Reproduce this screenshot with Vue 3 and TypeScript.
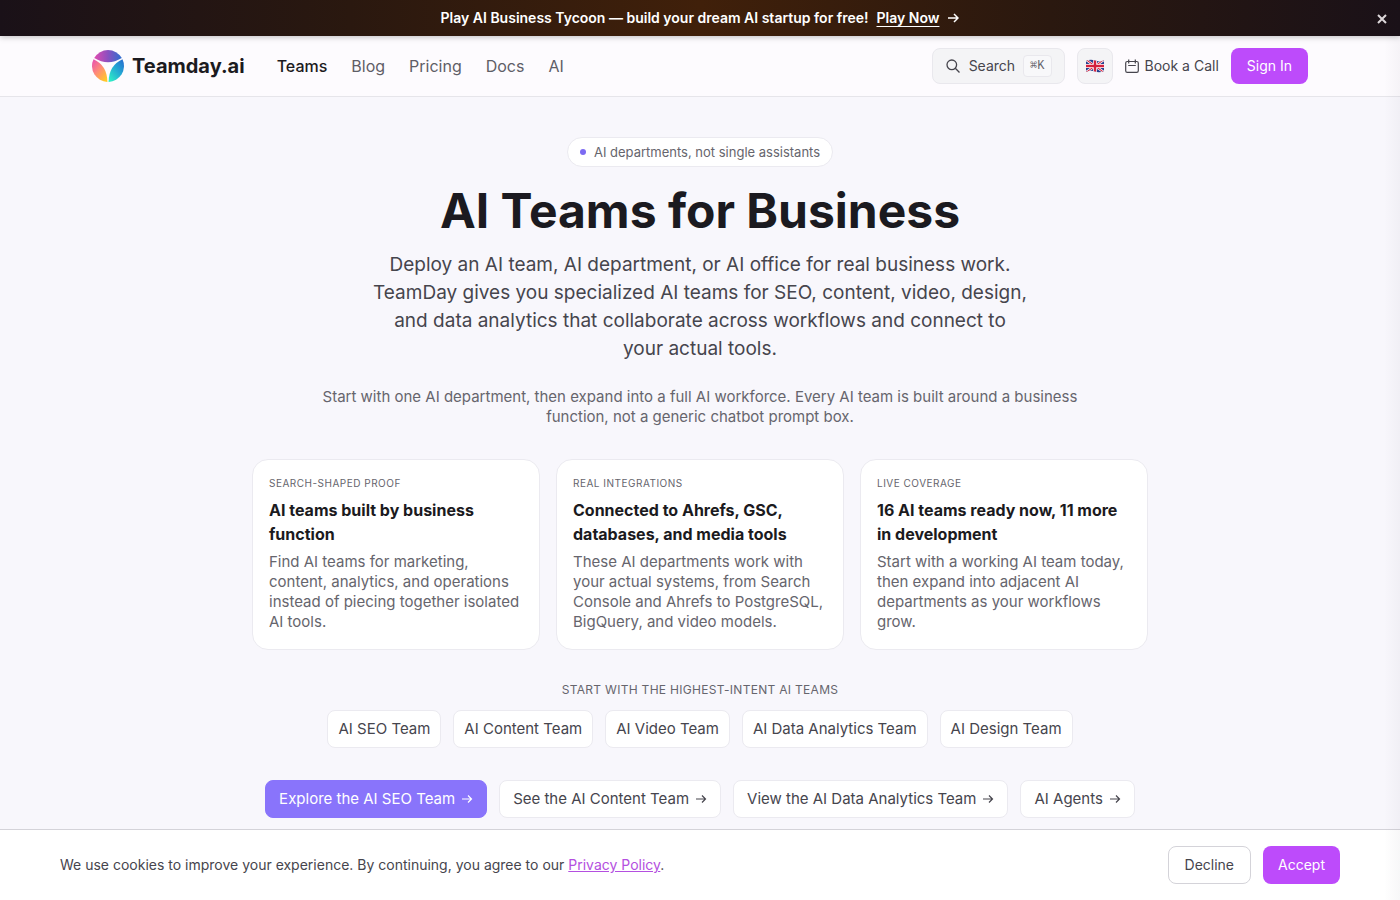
<script setup lang="ts">
interface Card {
  label: string
  title: string
  text: string
}

const navItems: string[] = ['Teams', 'Blog', 'Pricing', 'Docs', 'AI']

const cards: Card[] = [
  {
    label: 'Search-shaped proof',
    title: 'AI teams built by business function',
    text: 'Find AI teams for marketing, content, analytics, and operations instead of piecing together isolated AI tools.',
  },
  {
    label: 'Real integrations',
    title: 'Connected to Ahrefs, GSC, databases, and media tools',
    text: 'These AI departments work with your actual systems, from Search Console and Ahrefs to PostgreSQL, BigQuery, and video models.',
  },
  {
    label: 'Live coverage',
    title: '16 AI teams ready now, 11 more in development',
    text: 'Start with a working AI team today, then expand into adjacent AI departments as your workflows grow.',
  },
]

const teams: string[] = [
  'AI SEO Team',
  'AI Content Team',
  'AI Video Team',
  'AI Data Analytics Team',
  'AI Design Team',
]

const actions: string[] = [
  'Explore the AI SEO Team',
  'See the AI Content Team',
  'View the AI Data Analytics Team',
  'AI Agents',
]
</script>

<template>
  <div class="page">
    <div class="promo">
      <p class="promo-text">
        <span>Play AI Business Tycoon — build your dream AI startup for free!</span>
        <a href="#" class="promo-link">Play Now</a>
        <svg class="promo-arrow" viewBox="0 0 12 12" aria-hidden="true">
          <path d="M1 6h10M7 2l4 4-4 4" />
        </svg>
      </p>
      <button type="button" class="promo-close" aria-label="Close">
        <svg viewBox="0 0 10 10" aria-hidden="true"><path d="M1 1l8 8M9 1L1 9" /></svg>
      </button>
    </div>

    <header class="header">
      <div class="header-inner">
        <a href="#" class="brand">
          <svg class="logo" viewBox="0 0 32 32" aria-hidden="true">
            <defs>
              <linearGradient id="logo-top" x1="0" y1="0" x2="1" y2="0">
                <stop offset="0" stop-color="#e14bb0" />
                <stop offset="0.5" stop-color="#8a50c0" />
                <stop offset="1" stop-color="#2b6fd0" />
              </linearGradient>
              <linearGradient id="logo-left" x1="0" y1="0" x2="0.8" y2="1">
                <stop offset="0" stop-color="#e64cb4" />
                <stop offset="0.5" stop-color="#ff8b78" />
                <stop offset="1" stop-color="#ffc928" />
              </linearGradient>
              <linearGradient id="logo-right" x1="1" y1="0" x2="0.2" y2="1">
                <stop offset="0" stop-color="#2869cf" />
                <stop offset="0.5" stop-color="#23a9d3" />
                <stop offset="1" stop-color="#2eebc6" />
              </linearGradient>
            </defs>
            <path fill="url(#logo-top)" d="M2.2 8A16 16 0 0 1 29.8 8Q16 16.4 2.2 8Z" />
            <path fill="url(#logo-left)" d="M1.5 9.3Q15.2 15.4 15.4 32A16 16 0 0 1 1.5 9.3Z" />
            <path fill="url(#logo-right)" d="M30.5 9.3Q16.8 15.4 16.6 32A16 16 0 0 0 30.5 9.3Z" />
          </svg>
          <span>Teamday.ai</span>
        </a>
        <nav class="nav" aria-label="Main">
          <a
            v-for="(item, i) in navItems"
            :key="item"
            href="#"
            class="nav-link"
            :class="{ active: i === 0 }"
          >{{ item }}</a>
        </nav>
        <div class="tools">
          <button type="button" class="search">
            <svg class="search-icon" viewBox="0 0 16 16" aria-hidden="true">
              <circle cx="6.8" cy="6.8" r="4.8" />
              <path d="M10.300 10.300L14.500 14.500" />
            </svg>
            <span>Search</span>
            <kbd class="kbd">⌘K</kbd>
          </button>
          <button type="button" class="language" aria-label="Language: English">
            <svg class="flag" viewBox="0 0 20 14" aria-hidden="true">
              <defs>
                <clipPath id="flag-wave">
                  <path d="M1 2Q5.500 -0.200 10 1.600T19 1.200V12Q14.500 14.200 10 12.500T1 13Z" />
                </clipPath>
              </defs>
              <g clip-path="url(#flag-wave)">
                <rect width="20" height="14" fill="#27408f" />
                <path d="M0 0L20 14M20 0L0 14" stroke="#fff" stroke-width="2.400" />
                <path d="M0 0L20 14M20 0L0 14" stroke="#d4213d" stroke-width="1.100" />
                <path d="M10 0V14M0 7H20" stroke="#fff" stroke-width="3.800" />
                <path d="M10 0V14M0 7H20" stroke="#d4213d" stroke-width="2.400" />
              </g>
            </svg>
          </button>
          <a href="#" class="book">
            <svg class="calendar" viewBox="0 0 14 14" aria-hidden="true">
              <rect x="0.700" y="2.500" width="12.600" height="10.800" rx="1.600" />
              <path d="M3.700 0.500v4M10.300 0.500v4M3.200 6.500h7.600" />
            </svg>
            <span>Book a Call</span>
          </a>
          <button type="button" class="sign-in">Sign In</button>
        </div>
      </div>
    </header>

    <main class="hero">
      <p class="pill"><span class="dot"></span>AI departments, not single assistants</p>
      <h1 class="title">AI Teams for Business</h1>
      <p class="lead">
        Deploy an AI team, AI department, or AI office for real business work. TeamDay gives you
        specialized AI teams for SEO, content, video, design, and data analytics that collaborate
        across workflows and connect to your actual tools.
      </p>
      <p class="sublead">
        Start with one AI department, then expand into a full AI workforce. Every AI team is built
        around a business function, not a generic chatbot prompt box.
      </p>

      <section class="cards">
        <article v-for="card in cards" :key="card.label" class="card">
          <p class="card-label">{{ card.label }}</p>
          <h2 class="card-title">{{ card.title }}</h2>
          <p class="card-text">{{ card.text }}</p>
        </article>
      </section>

      <p class="teams-label">Start with the highest-intent AI teams</p>
      <div class="teams">
        <a v-for="team in teams" :key="team" href="#" class="chip">{{ team }}</a>
      </div>

      <div class="actions">
        <a
          v-for="(action, i) in actions"
          :key="action"
          href="#"
          class="action"
          :class="{ primary: i === 0 }"
        >
          <span>{{ action }}</span>
          <svg class="action-arrow" viewBox="0 0 12 12" aria-hidden="true">
            <path d="M1 6h9.500M7 2.500L10.500 6L7 9.500" />
          </svg>
        </a>
      </div>
    </main>

    <div class="edge-shade" aria-hidden="true"></div>

    <aside class="cookies" aria-label="Cookie notice">
      <div class="cookies-inner">
        <p class="cookies-text">
          We use cookies to improve your experience. By continuing, you agree to our
          <a href="#">Privacy Policy</a>.
        </p>
        <div class="cookies-actions">
          <button type="button" class="decline">Decline</button>
          <button type="button" class="accept">Accept</button>
        </div>
      </div>
    </aside>
  </div>
</template>

<style>
body {
  margin: 0;
  background: #f8f7fc;
}
</style>

<style scoped>
.page {
  position: relative;
  height: 100vh;
  overflow: hidden;
  background: #f8f7fc;
  color: #46454d;
  font-family: Inter, 'Liberation Sans', sans-serif;
  font-size: 14px;
  line-height: 20px;
}

.page *,
.page *::before {
  box-sizing: border-box;
}

p,
h1,
h2 {
  margin: 0;
}

a {
  color: inherit;
  text-decoration: none;
}

button {
  margin: 0;
  font: inherit;
  color: inherit;
  cursor: pointer;
}

svg {
  flex: none;
  fill: none;
}

.promo {
  position: relative;
  z-index: 2;
  display: flex;
  align-items: center;
  justify-content: center;
  height: 36px;
  background: linear-gradient(90deg, #1a1118 0%, #2a180f 25%, #40200a 50%, #2a180f 75%, #1a1118 100%);
  box-shadow: 0 1px 6px rgba(0, 0, 0, 0.25);
  color: #fff;
  font-weight: 600;
}

.promo-text {
  display: flex;
  align-items: center;
  gap: 8px;
}

.promo-link {
  text-decoration: underline;
  text-underline-offset: 3px;
}

.promo-arrow {
  width: 12px;
  height: 12px;
  stroke: #fff;
  stroke-width: 1.5;
}

.promo-close {
  position: absolute;
  right: 8px;
  top: 9px;
  display: grid;
  place-items: center;
  width: 20px;
  height: 20px;
  padding: 0;
  border: 0;
  background: none;
}

.promo-close svg {
  width: 10px;
  height: 10px;
  stroke: #ddd8da;
  stroke-width: 2;
}

.header {
  border-bottom: 1px solid #e6e5ea;
  background: #fdfbfe;
}

.header-inner {
  display: flex;
  align-items: center;
  max-width: 1280px;
  height: 60px;
  margin: 0 auto;
  padding: 0 32px;
}

.brand {
  display: flex;
  align-items: center;
  gap: 8px;
  color: #1b1a20;
  font-size: 20px;
  font-weight: 700;
  line-height: 28px;
}

.logo {
  width: 32px;
  height: 32px;
}

.nav {
  display: flex;
  gap: 24px;
  margin-left: 32px;
  color: #5f5e66;
  font-size: 16px;
  line-height: 24px;
}

.nav-link.active {
  color: #1b1a20;
  font-weight: 500;
}

.tools {
  display: flex;
  align-items: center;
  gap: 12px;
  margin-left: auto;
}

.search {
  display: flex;
  align-items: center;
  gap: 8px;
  height: 36px;
  padding: 0 12px;
  border: 1px solid #e9e8ed;
  border-radius: 8px;
  background: #f4f4f6;
}

.search-icon {
  width: 16px;
  height: 16px;
  stroke: #46454d;
  stroke-width: 1.3;
}

.calendar {
  width: 14px;
  height: 14px;
  stroke: #46454d;
  stroke-width: 1.2;
}

.kbd {
  padding: 0 6px;
  border: 1px solid #e9e8ed;
  border-radius: 4px;
  background: #f8f8fa;
  color: #66656d;
  font-family: 'Liberation Mono', 'DejaVu Sans Mono', monospace;
  font-size: 12px;
  line-height: 20px;
}

.language {
  display: grid;
  place-items: center;
  width: 36px;
  height: 36px;
  padding: 0;
  border: 1px solid #e9e8ed;
  border-radius: 8px;
  background: #f4f4f6;
}

.flag {
  width: 20px;
  height: 14px;
}

.book {
  display: flex;
  align-items: center;
  gap: 6px;
}

.sign-in {
  height: 36px;
  padding: 0 16px;
  border: 0;
  border-radius: 8px;
  background: #bd4bfb;
  color: #fff;
}

.hero {
  display: flex;
  flex-direction: column;
  align-items: center;
  padding: 40px 24px 0;
  font-size: 15px;
  text-align: center;
}

.pill {
  display: flex;
  align-items: center;
  gap: 8px;
  padding: 6px 12px;
  border: 1px solid #ebeaf0;
  border-radius: 15px;
  background: #fff;
  color: #66656d;
  font-size: 13px;
  line-height: 16px;
}

.dot {
  width: 6px;
  height: 6px;
  border-radius: 50%;
  background: #7c6af2;
}

.title {
  margin-top: 20px;
  color: #1b1a20;
  font-size: 48px;
  font-weight: 700;
  line-height: 48px;
}

.lead {
  max-width: 655px;
  margin-top: 16px;
  font-size: 19px;
  line-height: 28px;
}

.sublead {
  max-width: 768px;
  margin-top: 24px;
  color: #66656d;
}

.cards {
  display: grid;
  grid-template-columns: repeat(3, 1fr);
  gap: 16px;
  width: 100%;
  max-width: 896px;
  margin-top: 32px;
  text-align: left;
}

.card {
  padding: 16px 12px 17px 16px;
  border: 1px solid #ebeaf0;
  border-radius: 16px;
  background: #fff;
}

.card-label {
  color: #66656d;
  font-size: 10px;
  line-height: 14px;
  letter-spacing: 0.05em;
  text-transform: uppercase;
}

.card-title {
  margin-top: 8px;
  color: #1b1a20;
  font-size: 16px;
  font-weight: 700;
  line-height: 24px;
}

.card-text {
  margin-top: 6px;
  color: #66656d;
}

.teams-label {
  margin-top: 32px;
  color: #66656d;
  font-size: 12px;
  line-height: 16px;
  letter-spacing: 0.025em;
  text-transform: uppercase;
}

.teams,
.actions {
  display: flex;
  flex-wrap: wrap;
  justify-content: center;
  gap: 12px;
}

.teams {
  margin-top: 12px;
}

.chip,
.action {
  padding: 8px 10px;
  border: 1px solid #ebeaf0;
  border-radius: 8px;
  background: #fff;
}

.actions {
  margin-top: 32px;
}

.action {
  display: flex;
  align-items: center;
  gap: 6px;
  padding: 8px 13px;
}

.action.primary {
  border-color: #8974fb;
  background: #8974fb;
  color: #fff;
}

.action-arrow {
  width: 12px;
  height: 12px;
  stroke: currentColor;
  stroke-width: 1.2;
}

.edge-shade {
  position: absolute;
  top: 36px;
  bottom: 0;
  right: 0;
  z-index: 4;
  width: 16px;
  background: linear-gradient(90deg, rgba(60, 50, 80, 0), rgba(60, 50, 80, 0.04));
  pointer-events: none;
}

.cookies {
  position: absolute;
  left: 0;
  right: 0;
  bottom: 0;
  z-index: 3;
  border-top: 1px solid #d4d3d9;
  background: #fff;
}

.cookies-inner {
  display: flex;
  align-items: center;
  justify-content: space-between;
  max-width: 1280px;
  margin: 0 auto;
  padding: 16px 0;
}

.cookies-text a {
  color: #b44fe0;
  text-decoration: underline;
}

.cookies-actions {
  display: flex;
  gap: 12px;
}

.decline,
.accept {
  height: 38px;
  padding: 0 16px;
  border: 1px solid #d4d3d9;
  border-radius: 8px;
  background: #fff;
}

.accept {
  padding: 0 15px;
  border: 0;
  background: #bd4bfb;
  color: #fff;
}
</style>
